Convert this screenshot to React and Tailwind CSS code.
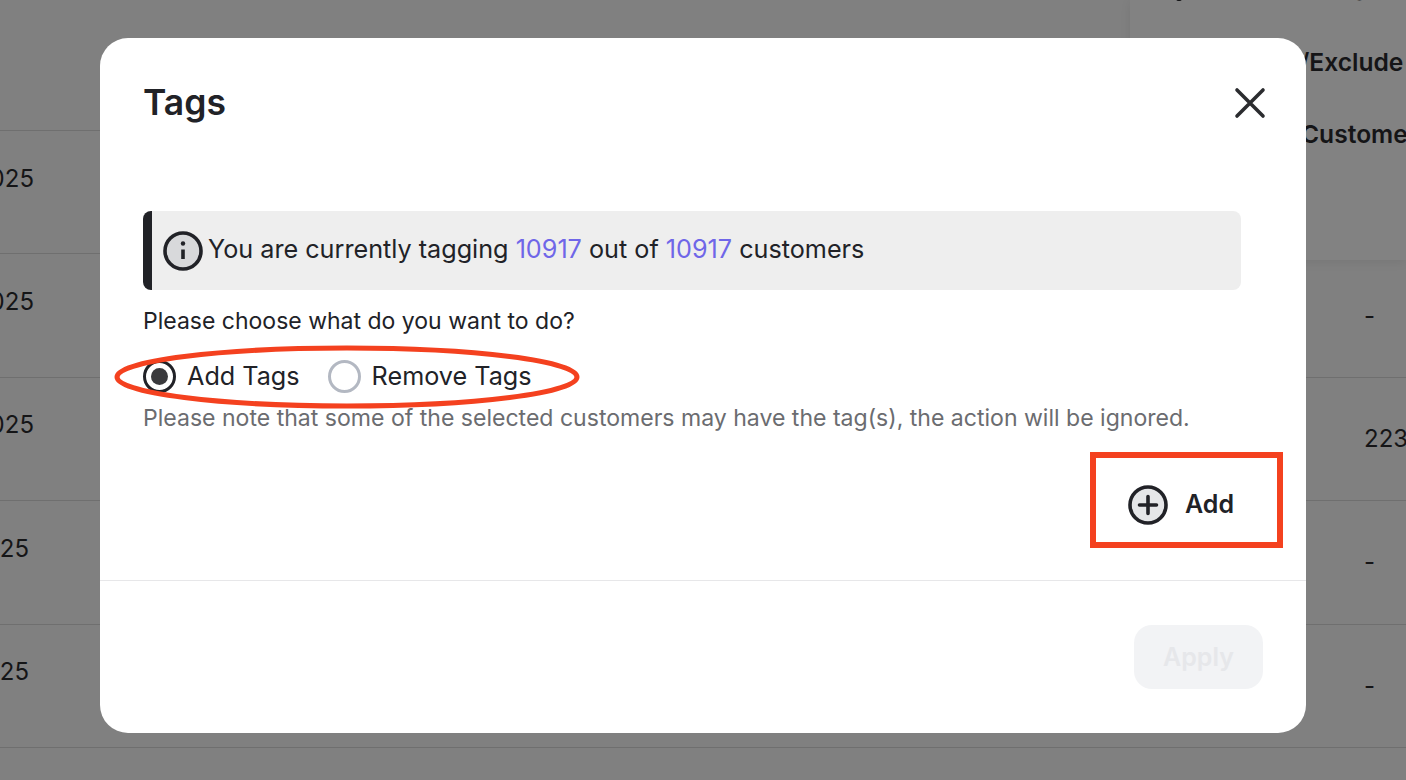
import React from "react"

const rows = [
  { date: "2025", dateWidth: "w-[34px]", value: "" },
  { date: "2025", dateWidth: "w-[34px]", value: "-" },
  { date: "2025", dateWidth: "w-[34px]", value: "223" },
  { date: "25", dateWidth: "w-[29px]", value: "-" },
  { date: "25", dateWidth: "w-[29px]", value: "-" },
]

function InfoIcon() {
  return (
    <svg width="40" height="40" viewBox="0 0 40 40" fill="none" className="shrink-0">
      <circle cx="20" cy="20" r="18" fill="#d8d9db" stroke="#212227" strokeWidth="3.6" />
      <path d="M20 18.5V28" stroke="#212227" strokeWidth="3.6" />
      <circle cx="20" cy="12.5" r="2.2" fill="#212227" />
    </svg>
  )
}

function PlusIcon() {
  return (
    <svg width="40" height="40" viewBox="0 0 40 40" fill="none" className="shrink-0">
      <circle cx="20" cy="20" r="18" fill="#e5e6e8" stroke="#212227" strokeWidth="3.6" />
      <path d="M20 11.5V28.5M11.5 20H28.5" stroke="#212227" strokeWidth="3.6" strokeLinecap="round" />
    </svg>
  )
}

export default function App() {
  return (
    <div className="relative h-[780px] w-full overflow-hidden bg-[#808080] font-['Inter',sans-serif] text-[#151517]">
      {/* table behind the dialog */}
      <div className="h-[131px] border-b border-[#6f6f6f]" />
      {rows.map((row, index) => (
        <div key={index} className="flex h-[123.4px] items-center justify-between border-b border-[#6f6f6f] text-[24px]">
          <div className={`${row.dateWidth} flex justify-end overflow-hidden pb-[27px]`}>{row.date}</div>
          <div className="w-[42px] overflow-hidden whitespace-nowrap">{row.value}</div>
        </div>
      ))}

      {/* dropdown behind the dialog */}
      <div className="absolute top-0 right-0 h-[260px] w-[276px] overflow-hidden bg-[#828282] font-semibold shadow-[0_2px_10px_rgba(0,0,0,0.08)]">
        <div className="-mt-[29px] flex h-[30px] items-center">
          <svg width="26" height="30" viewBox="0 0 26 30" fill="none" className="ml-[36px] shrink-0">
            <path d="M3 4H23V17C23 22 18 26 13 29C8 26 3 22 3 17Z" stroke="#151517" strokeWidth="3" />
          </svg>
          <span className="ml-[6px] text-[25px] leading-[30px] whitespace-nowrap">Groups by tag</span>
        </div>
        <div className="mt-[45px] ml-[170px] text-[24.6px] leading-[32px] whitespace-nowrap">/Exclude</div>
        <div className="mt-[40px] ml-[171px] text-[24.6px] leading-[32px] whitespace-nowrap">Customer</div>
      </div>

      {/* dialog */}
      <div className="absolute top-[38px] left-[100px] flex h-[695px] w-[1206px] flex-col rounded-[28px] bg-white text-[#212227]">
        <div className="flex items-center justify-between pt-[42px] pr-[40px] pl-[44px]">
          <h1 className="-ml-[1px] pt-[1px] text-[35.5px] leading-[44px] font-semibold">Tags</h1>
          <svg width="32" height="32" viewBox="0 0 32 32" fill="none">
            <path d="M3 3L29 29M29 3L3 29" stroke="#2b2c2f" strokeWidth="3.6" strokeLinecap="round" />
          </svg>
        </div>

        <div className="px-[43px] pt-[86px]">
          <div className="flex h-[79px] w-[1098px] items-center gap-[5px] rounded-[8px] border-l-[9px] border-[#212227] bg-[#eeeeee] pl-[11px] text-[25.2px]">
            <InfoIcon />
            <span className="pb-[2px]">
              You are currently tagging <span className="text-[#6f66e8]">10917</span> out of{" "}
              <span className="text-[#6f66e8]">10917</span> customers
            </span>
          </div>

          <p className="mt-[16px] text-[23px] leading-[30px]">Please choose what do you want to do?</p>

          <div className="mt-[20px] flex h-[40px] items-center text-[25.2px]">
            <span className="flex size-[33px] items-center justify-center rounded-full border-[3px] border-[#212227]">
              <span className="size-[17px] rounded-full bg-[#3a3a3d]" />
            </span>
            <span className="ml-[11px] pt-[2px]">Add Tags</span>
            <span className="ml-[28px] size-[33px] rounded-full border-[3px] border-[#b3b8c2]" />
            <span className="ml-[11px] pt-[2px]">Remove Tags</span>
          </div>

          <p className="mt-[7px] text-[23.05px] leading-[30px] text-[#6b6c70]">
            Please note that some of the selected customers may have the tag(s), the action will be ignored.
          </p>

          <div className="mt-[52px] flex justify-end pr-[29px]">
            <button className="flex h-[40px] items-center gap-[17px] text-[25px] font-semibold">
              <PlusIcon />
              Add
            </button>
          </div>
        </div>

        <div className="mt-auto flex h-[153px] items-center justify-end border-t border-[#e7e7e9] pr-[43px]">
          <button className="h-[64px] w-[129px] rounded-[18px] bg-[#f2f3f5] pt-[2px] text-[25px] font-semibold text-[#e6e7ea]">
            Apply
          </button>
        </div>
      </div>

      {/* red annotations */}
      <svg width="470" height="68" viewBox="0 0 470 68" fill="none" className="absolute top-[343px] left-[112px]">
        <ellipse cx="235" cy="34" rx="230" ry="29" stroke="#f4411f" strokeWidth="5" />
      </svg>
      <div className="absolute top-[452px] left-[1090px] h-[96px] w-[193px] border-[6px] border-[#f4411f]" />
    </div>
  )
}
